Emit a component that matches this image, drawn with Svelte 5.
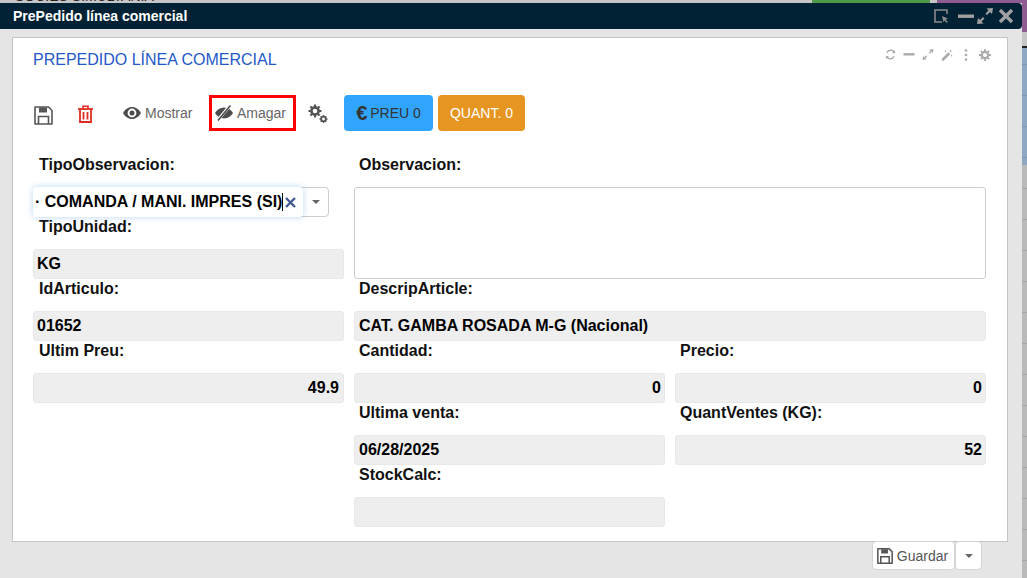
<script>
  const fieldsLeft = [
    { label: "TipoUnidad:", value: "KG" },
    { label: "IdArticulo:", value: "01652" },
    { label: "Ultim Preu:", value: "49.9", right: true },
  ];
  const fieldsRight = [
    { label: "Cantidad:", value: "0", right: true },
    { label: "Precio:", value: "0", right: true },
    { label: "Ultima venta:", value: "06/28/2025" },
    { label: "QuantVentes (KG):", value: "52", right: true },
    { label: "StockCalc:", value: "" },
  ];
</script>

<div class="page">
  <div class="backdrop-top"><span>SOCIES SIMULTANIA</span></div>
  <div class="stage">
    <div class="win">
      <div class="titlebar">
        <span class="win-title">PrePedido línea comercial</span>
        <div class="win-tools">
          <svg class="t-pick" width="16" height="16" viewBox="0 0 16 16" fill="none"><path d="M14 6V2H2v12h7" stroke="currentColor" stroke-width="1.6"/><path d="M9 8l6 2.5-2.2 1 2 2.5-1.2 1-2-2.5-1.2 1.8z" fill="currentColor"/></svg>
          <svg class="t-min" width="16" height="16" viewBox="0 0 16 16"><rect x="0" y="6.5" width="16" height="3.4" fill="currentColor"/></svg>
          <svg class="t-max" width="16" height="16" viewBox="0 0 16 16"><path d="M16 0l-1 6-2-2-3 3-1.5-1.500 3-3-2-2zM0 16l1-6 2 2 3-3 1.500 1.500-3 3 2 2z" fill="currentColor"/></svg>
          <svg class="t-close" width="16" height="16" viewBox="0 0 16 16" fill="none"><path d="M2 2l12 12M14 2L2 14" stroke="currentColor" stroke-width="3.4"/></svg>
        </div>
      </div>

      <div class="card">
        <div class="card-head">
          <h2>PREPEDIDO LÍNEA COMERCIAL</h2>
          <div class="card-tools">
            <svg width="11" height="11" viewBox="0 0 12 12" fill="none"><path d="M10 3.500A4.500 4.500 0 0 0 2 4M2 8.500A4.500 4.500 0 0 0 10 8" stroke="currentColor" stroke-width="1.500"/><path d="M11 1v3.500H7.500zM1 11V7.500h3.500z" fill="currentColor"/></svg>
            <svg width="12" height="11" viewBox="0 0 12 12"><rect y="4.500" width="12" height="2.600" fill="currentColor"/></svg>
            <svg width="12" height="11" viewBox="0 0 12 12"><path d="M12 0l-.8 4.500-1.400-1.400-2 2-1-1 2-2L7.500.7zM0 12l.8-4.500 1.400 1.400 2-2 1 1-2 2 1.300 1.400z" fill="currentColor"/></svg>
            <svg width="12" height="12" viewBox="0 0 12 12"><path d="M0.300 10.300l7-7 1.900 1.900-7 7z" fill="currentColor"/><path d="M9.500 0.500l.5 1 1 .5-1 .5-.5 1-.5-1-1-.5 1-.5zM4.500 1l.4.800.8.400-.8.400-.4.800-.4-.8-.8-.4.800-.4zM10.500 5.500l.4.800.8.400-.8.400-.4.800-.4-.8-.8-.4.800-.4z" fill="currentColor"/></svg>
            <svg class="dots" width="4" height="12" viewBox="0 0 4 12"><circle cx="2" cy="1.500" r="1.300" fill="currentColor"/><circle cx="2" cy="6" r="1.300" fill="currentColor"/><circle cx="2" cy="10.500" r="1.300" fill="currentColor"/></svg>
            <svg width="12" height="12" viewBox="0 0 12 12" fill="none"><circle cx="6" cy="6" r="3.200" stroke="currentColor" stroke-width="2.200"/><path d="M6 0v2M6 10v2M0 6h2M10 6h2M1.800 1.800l1.400 1.400M8.800 8.800l1.400 1.400M1.800 10.200l1.400-1.400M8.800 3.200l1.400-1.400" stroke="currentColor" stroke-width="1.800"/></svg>
          </div>
        </div>

        <div class="toolbar">
          <button class="icon-btn save" aria-label="Guardar">
            <svg width="19" height="19" viewBox="0 0 19 19" fill="none"><path d="M1 1h13.500L18 4.500V18H1z" stroke="currentColor" stroke-width="1.600" stroke-linejoin="round"/><path d="M5 1.500h8v5H5z" fill="currentColor"/><path d="M4.500 18v-7.500h10V18" stroke="currentColor" stroke-width="1.600"/></svg>
          </button>
          <button class="icon-btn trash" aria-label="Eliminar">
            <svg width="15" height="18" viewBox="0 0 15 18" fill="none"><path d="M0 4h15" stroke="currentColor" stroke-width="1.800"/><path d="M5 4V1.200h5V4" stroke="currentColor" stroke-width="1.600"/><path d="M2 4.500V17h11V4.500" stroke="currentColor" stroke-width="1.800"/><path d="M5.500 7v7.500M9.500 7v7.500" stroke="currentColor" stroke-width="1.800"/></svg>
          </button>
          <button class="text-btn mostrar">
            <svg width="18" height="12" viewBox="0 0 18 12"><path fill-rule="evenodd" d="M9 0c3.800 0 7 2.400 9 6-2 3.600-5.200 6-9 6s-7-2.400-9-6c2-3.600 5.200-6 9-6zM9 1.600a4.400 4.400 0 1 0 0 8.800 4.400 4.400 0 0 0 0-8.800zM9 3.500a2.500 2.500 0 1 1 0 5 2.500 2.500 0 0 1 0-5z" fill="currentColor"/></svg>
            Mostrar
          </button>
          <button class="text-btn amagar">
            <svg width="18" height="16" viewBox="0 0 18 16"><path d="M9 2.500c3.800 0 7 2.400 9 5.500-2 3.100-5.200 5.500-9 5.500S2 11.100 0 8c2-3.100 5.200-5.500 9-5.500z" fill="currentColor"/><path d="M2.500 15.500L15 .5" stroke="#fff" stroke-width="3"/><path d="M3 15.500L15.500.5" stroke="currentColor" stroke-width="1.600"/></svg>
            Amagar
          </button>
          <button class="icon-btn gears" aria-label="Opciones">
            <svg width="20" height="20" viewBox="0 0 20 20" fill="none"><circle cx="7" cy="7" r="3.600" stroke="currentColor" stroke-width="2.600"/><path d="M7 .5v2.500M7 11v2.500M.5 7H3M11 7h2.500M2.400 2.400l1.800 1.800M9.800 9.800l1.800 1.800M2.400 11.600l1.800-1.800M9.800 4.200l1.800-1.800" stroke="currentColor" stroke-width="2"/><circle cx="15.500" cy="15" r="2.300" stroke="currentColor" stroke-width="1.800"/><path d="M15.500 11v1.500M15.500 17.500V19M11.500 15H13M18 15h1.500M12.700 12.200l1 1M17.300 16.800l1 1M12.700 17.800l1-1M17.300 13.200l1-1" stroke="currentColor" stroke-width="1.300"/></svg>
          </button>
          <button class="pill blue"><span class="euro">€</span> PREU 0</button>
          <button class="pill orange">QUANT. 0</button>
        </div>

        <div class="form">
          <div class="left">
            <div class="field">
              <span class="lbl">TipoObservacion:</span>
              <div class="combo">
                <div class="combo-input">
                  <span class="combo-text">· COMANDA / MANI. IMPRES (SI)</span>
                  <i class="caret-line"></i>
                  <svg class="clear" width="11" height="11" viewBox="0 0 11 11" fill="none"><path d="M1 1l9 9M10 1l-9 9" stroke="currentColor" stroke-width="2.400"/></svg>
                </div>
                <div class="combo-arrow"><i class="tri"></i></div>
              </div>
            </div>
            {#each fieldsLeft as f}
              <div class="field">
                <span class="lbl">{f.label}</span>
                <div class="ro" class:right={f.right}>{f.value}</div>
              </div>
            {/each}
          </div>

          <div class="main">
            <div class="field wide">
              <span class="lbl">Observacion:</span>
              <div class="area"></div>
            </div>
            <div class="field wide">
              <span class="lbl">DescripArticle:</span>
              <div class="ro">CAT. GAMBA ROSADA M-G (Nacional)</div>
            </div>
            {#each fieldsRight as f}
              <div class="field">
                <span class="lbl">{f.label}</span>
                <div class="ro" class:right={f.right}>{f.value}</div>
              </div>
            {/each}
          </div>
        </div>
      </div>

      <div class="footer">
        <button class="foot-btn">
          <svg width="16" height="16" viewBox="0 0 19 19" fill="none"><path d="M1 1h13.500L18 4.500V18H1z" stroke="currentColor" stroke-width="1.800" stroke-linejoin="round"/><path d="M5 1.500h8v5H5z" fill="currentColor"/><path d="M4.500 18v-7.500h10V18" stroke="currentColor" stroke-width="1.800"/></svg>
          Guardar
        </button>
        <button class="foot-split" aria-label="Más"><i class="tri"></i></button>
      </div>
    </div>
    <div class="backdrop-side"></div>
  </div>
</div>

<style>
  :global(body) { margin: 0; background: #e5e5e5; }

  .page {
    width: 1027px;
    height: 578px;
    overflow: hidden;
    font-family: "Liberation Sans", Arial, sans-serif;
    display: flex;
    flex-direction: column;
  }

  .backdrop-top {
    height: 3px;
    flex-shrink: 0;
    overflow: hidden;
    background: linear-gradient(90deg, #c6c6c6 0 812px, #4e9a4a 812px 930px, #c6c6c6 930px 937px, #8e5c90 937px);
  }
  .backdrop-top span {
    display: block;
    margin: -11px 0 0 15px;
    font-size: 14px;
    line-height: 14px;
    color: #222;
  }

  .stage { flex: 1; display: flex; min-height: 0; }

  .win {
    flex: 1;
    display: flex;
    flex-direction: column;
    background: #e5e5e5;
    min-width: 0;
  }

  /* strip of the page behind the dialog */
  .backdrop-side {
    width: 5px;
    flex-shrink: 0;
    background:
      linear-gradient(180deg, #8e5c90 0 29px, #c6c6c6 29px 43px, #222 43px 45px, transparent 45px),
      repeating-linear-gradient(180deg, transparent 0 30px, rgba(0, 0, 0, 0.1) 30px 31px),
      linear-gradient(180deg, #8ea8c4 0 162px, #b9b9b9 162px);
  }

  .titlebar {
    height: 26px;
    flex-shrink: 0;
    display: flex;
    align-items: center;
    justify-content: space-between;
    padding: 0 8px 0 13px;
    background: #012235;
    border-radius: 0 4px 4px 0;
  }
  .win-title { color: #fff; font-size: 14px; font-weight: 700; }
  .win-tools { display: flex; align-items: center; color: #a0a0a0; }
  .t-pick { color: #8a8a8a; }
  .t-min { margin-left: 9px; }
  .t-max { margin-left: 3px; }
  .t-close { margin-left: 5px; }

  .card {
    margin: 8px 14px 0 12px;
    height: 505px;
    box-sizing: border-box;
    flex-shrink: 0;
    padding: 0 21px 0 20px;
    background: #fff;
    border: 1px solid #c4c4c4;
  }

  .card-head {
    height: 42px;
    display: flex;
    align-items: center;
    justify-content: space-between;
    padding-top: 1px;
    box-sizing: border-box;
  }
  h2 { margin: 0; font-size: 16px; font-weight: 400; color: #2458c8; }
  .card-tools { display: flex; align-items: center; gap: 7px; color: #aaa; margin-top: -10px; margin-right: -5px; }
  .dots { margin: 0 4px; }

  .toolbar {
    display: flex;
    align-items: center;
    height: 36px;
    margin-top: 15px;
  }
  button {
    font-family: inherit;
    border: 0;
    background: none;
    padding: 0;
    cursor: pointer;
  }
  .icon-btn { display: flex; }
  .save { color: #555; margin-left: 1px; margin-top: 4px; }
  .trash { color: #e02b20; margin-left: 25px; margin-top: 2px; }
  .text-btn {
    display: flex;
    align-items: center;
    gap: 4px;
    font-size: 14px;
    color: #666;
  }
  .text-btn svg { color: #4c4c4c; }
  .mostrar { margin-left: 30px; width: 71px; }
  .amagar {
    margin-left: 15px;
    width: 87px;
    height: 36px;
    box-sizing: border-box;
    border: 3px solid #f00;
    padding-left: 3px;
    gap: 4px;
  }
  .gears { color: #555; margin-left: 12px; margin-top: 2px; }
  .pill {
    height: 36px;
    border-radius: 4px;
    font-size: 14px;
    display: flex;
    align-items: center;
    justify-content: center;
    gap: 3px;
  }
  .blue { background: #31a5fd; color: #333; width: 89px; margin-left: 16px; }
  .euro { font-size: 20px; font-weight: 700; }
  .orange { background: #e59520; color: #fff; width: 87px; margin-left: 5px; }

  .form {
    margin-top: 24px;
    display: grid;
    grid-template-columns: 311px 632px;
    column-gap: 10px;
  }
  .main {
    display: grid;
    grid-template-columns: 311px 311px;
    column-gap: 10px;
  }
  .field { height: 62px; }
  .wide { grid-column: span 2; }
  .field:has(.area) { height: 124px; }

  .lbl {
    display: block;
    height: 32px;
    padding: 0 0 0 6px;
    font-size: 16px;
    line-height: 20px;
    font-weight: 700;
    color: #111;
  }
  .main .lbl { padding-left: 5px; }

  .ro {
    height: 30px;
    box-sizing: border-box;
    padding: 0 3px;
    background: #eee;
    border: 1px solid #e8e8e8;
    border-radius: 3px;
    font-size: 16px;
    line-height: 28px;
    font-weight: 700;
    color: #000;
  }
  .left .ro { padding-right: 4px; }
  .main .ro { padding-left: 4px; }
  .ro.right { text-align: right; }

  .area {
    height: 92px;
    box-sizing: border-box;
    border: 1px solid #ccc;
    border-radius: 3px;
    background: #fff;
  }

  .combo {
    width: 296px;
    height: 30px;
    box-sizing: border-box;
    display: flex;
    border: 1px solid #ccc;
    border-radius: 4px;
    position: relative;
  }
  .combo-input {
    position: absolute;
    left: -1px;
    top: -1px;
    width: 270px;
    height: 30px;
    background: #fff;
    border-radius: 3px;
    box-shadow: 0 0 6px rgba(90, 160, 235, 0.45);
    display: flex;
    align-items: center;
    padding-left: 2px;
    box-sizing: border-box;
    font-size: 16px;
    font-weight: 700;
    color: #000;
  }
  .combo-text { white-space: nowrap; }
  .caret-line { width: 1px; height: 18px; background: #000; }
  .clear { color: #41598b; margin-left: 2px; }
  .combo-arrow {
    margin-left: auto;
    width: 25px;
    display: flex;
    align-items: center;
    justify-content: center;
  }
  .tri {
    width: 0;
    height: 0;
    border-left: 4px solid transparent;
    border-right: 4px solid transparent;
    border-top: 4px solid #666;
  }

  .footer {
    display: flex;
    margin: -1px 0 0 872px;
  }
  .foot-btn {
    width: 83px;
    height: 29px;
    box-sizing: border-box;
    display: flex;
    align-items: center;
    justify-content: center;
    gap: 4px;
    padding-right: 2px;
    background: #fff;
    border: 1px solid #d4d4d4;
    border-radius: 4px;
    font-size: 14px;
    color: #555;
  }
  .foot-split {
    width: 27px;
    height: 29px;
    box-sizing: border-box;
    display: flex;
    align-items: center;
    justify-content: center;
    background: #fff;
    border: 1px solid #d4d4d4;
    border-radius: 4px;
  }
</style>
